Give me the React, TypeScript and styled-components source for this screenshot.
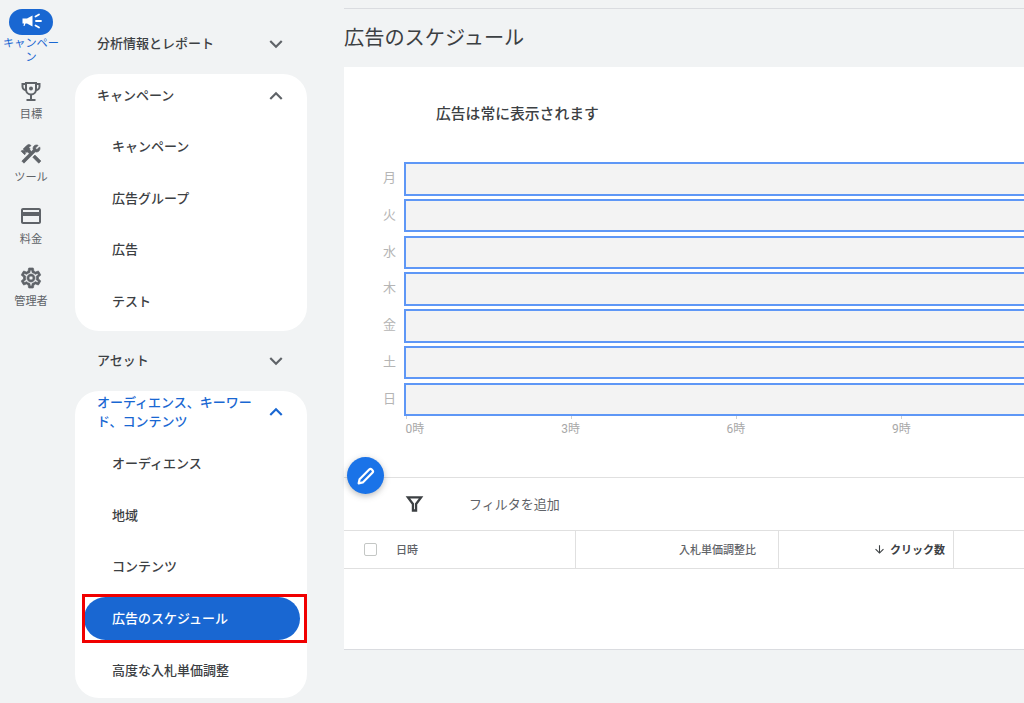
import React from 'react';
import styled, { createGlobalStyle } from 'styled-components';
import {
  MdConstruction,
  MdExpandLess,
  MdExpandMore,
  MdOutlineCreditCard,
  MdOutlineSettings,
  MdArrowDownward,
} from 'react-icons/md';

const GlobalStyle = createGlobalStyle`
  html, body {
    margin: 0;
    height: 100%;
    overflow: hidden;
    background: #f1f3f4;
    font-family: Roboto, "Noto Sans CJK JP", sans-serif;
  }
`;

const Page = styled.div`
  display: flex;
  width: 1024px;
  height: 703px;
  overflow: hidden;
`;

const Rail = styled.nav`
  flex: 0 0 62px;
  display: flex;
  flex-direction: column;
  align-items: center;
  padding-top: 9px;
`;

const RailItem = styled.div<{ $active?: boolean; $height: number }>`
  width: 62px;
  height: ${p => p.$height}px;
  display: flex;
  flex-direction: column;
  align-items: center;
  text-align: center;
  font-size: 11.2px;
  line-height: 13.5px;
  color: ${p => (p.$active ? '#1967d2' : '#5f6368')};
  word-break: break-all;
`;

const RailIcon = styled.div<{ $active?: boolean }>`
  width: 44px;
  height: 26px;
  border-radius: 13px;
  margin-bottom: ${p => (p.$active ? 2 : 4)}px;
  display: flex;
  align-items: center;
  justify-content: center;
  font-size: 24px;
  background: ${p => (p.$active ? '#1967d2' : 'transparent')};
  color: ${p => (p.$active ? '#fff' : '#5f6368')};
`;

const ThickIcon = styled.span`
  display: flex;
  svg {
    stroke: currentColor;
    stroke-width: 0.7;
  }
  svg path[fill='none'] {
    stroke: none;
  }
`;

const Sidebar = styled.aside`
  flex: 0 0 232px;
  margin-left: 13px;
  padding-top: 18px;
`;

const SectionHead = styled.div<{ $height: number; $accent?: boolean }>`
  box-sizing: border-box;
  height: ${p => p.$height}px;
  padding: 0 18px 0 22px;
  display: flex;
  align-items: flex-start;
  justify-content: space-between;
  gap: 8px;
  font-size: 13px;
  line-height: 19px;
  font-weight: 500;
  color: ${p => (p.$accent ? '#1967d2' : '#3c4043')};
  > span {
    padding-top: ${p => (p.$accent ? 2 : p.$height === 52 ? 16 : 12)}px;
  }
  svg {
    flex: 0 0 auto;
    font-size: 26px;
    margin-top: ${p => (p.$accent ? 8 : p.$height === 52 ? 13 : 9)}px;
    color: ${p => (p.$accent ? '#1967d2' : '#5f6368')};
  }
`;

const Card = styled.div<{ $top: number; $bottom: number; $pad: number }>`
  background: #fff;
  border-radius: 24px;
  margin: ${p => p.$top}px 0 ${p => p.$bottom}px;
  padding-bottom: ${p => p.$pad}px;
`;

const NavItem = styled.div<{ $height: number }>`
  height: ${p => p.$height}px;
  padding-left: 37px;
  display: flex;
  align-items: center;
  font-size: 13px;
  font-weight: 500;
  color: #3c4043;
`;

const ActiveFrame = styled.div`
  position: relative;
  height: 53.5px;
  display: flex;
  align-items: center;
  &::after {
    content: '';
    position: absolute;
    left: 7px;
    right: 0;
    top: 2px;
    height: 49px;
    box-sizing: border-box;
    border: 3px solid #f00000;
  }
`;

const ActivePill = styled.div`
  margin-left: 9px;
  width: 216px;
  height: 43px;
  border-radius: 22px;
  background: #1967d2;
  color: #fff;
  padding: 0 0 2px 28px;
  box-sizing: border-box;
  display: flex;
  align-items: center;
  font-size: 13px;
  font-weight: 500;
`;

const Main = styled.main`
  flex: 1;
  min-width: 0;
  margin-left: 37px;
  padding-top: 8px;
`;

const TopRule = styled.div`
  height: 1px;
  background: #dadce0;
`;

const PageTitle = styled.h1`
  margin: 0;
  height: 58px;
  display: flex;
  align-items: center;
  font-size: 20.2px;
  font-weight: 400;
  color: #3c4043;
  padding-bottom: 4px;
  box-sizing: border-box;
`;

const Panel = styled.section`
  position: relative;
  background: #fff;
  height: 582px;
  border-bottom: 1px solid #dadce0;
`;

const ChartTitle = styled.div`
  height: 95px;
  padding: 37px 0 0 92px;
  box-sizing: border-box;
  font-size: 14.8px;
  line-height: 20px;
  font-weight: 500;
  color: #3c4043;
`;

const DayRow = styled.div`
  height: 36.8px;
  display: flex;
`;

const DayLabel = styled.div`
  flex: 0 0 52px;
  margin-right: 8px;
  text-align: right;
  font-size: 13px;
  line-height: 31px;
  color: #b5b5b5;
`;

const DayBar = styled.div`
  flex: 1;
  height: 33.5px;
  box-sizing: border-box;
  background: #f3f3f3;
  border: 2px solid #5e97f6;
  border-right: none;
`;

const Axis = styled.div`
  display: flex;
  height: 24px;
  margin: -4px 0 0 61.5px;
`;

const AxisCell = styled.div<{ $first?: boolean }>`
  position: relative;
  flex: 0 0 165.3px;
  font-size: 12px;
  line-height: 26px;
  color: #a8a8a8;
  span {
    display: inline-block;
    transform: translateX(${p => (p.$first ? '0' : '-9.5px')});
  }
  &::before {
    content: '';
    position: absolute;
    left: 0;
    top: 0;
    width: 1px;
    height: 3px;
    background: #d0d0d0;
  }
`;

const Fab = styled.div`
  position: absolute;
  left: 3px;
  top: 390px;
  width: 37px;
  height: 37px;
  border-radius: 50%;
  background: #1a73e8;
  color: #fff;
  display: flex;
  align-items: center;
  justify-content: center;
  box-shadow: 0 2px 6px rgba(60, 64, 67, 0.35);
`;

const FilterBar = styled.div`
  margin-top: 37px;
  box-sizing: border-box;
  height: 54px;
  border-top: 1px solid #e0e0e0;
  border-bottom: 1px solid #e0e0e0;
  display: flex;
  align-items: center;
  gap: 44px;
  padding-left: 60px;
  font-size: 13px;
  color: #5f6368;
`;

const HeaderRow = styled.div`
  box-sizing: border-box;
  height: 38px;
  display: flex;
  border-bottom: 1px solid #e0e0e0;
  font-size: 11px;
`;

const HeaderCell = styled.div<{ $width: number; $pad: number; $right?: boolean; $strong?: boolean }>`
  flex: 0 0 ${p => p.$width}px;
  box-sizing: border-box;
  display: flex;
  align-items: center;
  justify-content: ${p => (p.$right ? 'flex-end' : 'flex-start')};
  border-right: 1px solid #e0e0e0;
  padding: ${p => (p.$right ? `0 ${p.$pad}px 0 0` : `0 0 0 ${p.$pad}px`)};
  color: ${p => (p.$strong ? '#3c4043' : '#5f6368')};
  font-weight: ${p => (p.$strong ? 700 : 500)};
  svg {
    font-size: 13px;
    margin-right: 4px;
  }
`;

const Checkbox = styled.div`
  width: 13px;
  height: 13px;
  box-sizing: border-box;
  border: 1px solid #c4c7c5;
  border-radius: 2px;
  margin-right: 19px;
`;

const CampaignIcon = () => (
  <svg width="24" height="24" viewBox="0 0 24 24" fill="none" stroke="currentColor" strokeLinecap="round">
    <path d="M3.500 8.500h4.500l5.500-3v11l-5.500-3H6.500l-1 2.500h-1l.5-2.500H3.500z" fill="currentColor" stroke="none" />
    <path d="M17 11h5M16.500 6.500l3.500-2M16.500 15.500l3.500 2" strokeWidth="1.800" />
  </svg>
);

const TrophyIcon = () => (
  <svg width="24" height="24" viewBox="0 0 24 24" fill="none" stroke="currentColor" strokeWidth="2">
    <path d="M7 4h10v6.500a5 5 0 0 1-10 0z" />
    <path d="M7 5H3.500v2.500A3.500 3.500 0 0 0 7 11M17 5h3.500v2.500A3.500 3.500 0 0 1 17 11" />
    <path d="M12 15.500V20M7.500 21h9" />
    <circle cx="12" cy="9.500" r="2" fill="currentColor" stroke="none" />
  </svg>
);

const PencilIcon = () => (
  <svg width="22" height="22" viewBox="0 0 24 24" fill="none" stroke="currentColor" strokeWidth="2.400" strokeLinejoin="round">
    <path d="M4 20l1-4.500L15.500 5a2 2 0 0 1 2.800 0l.7.700a2 2 0 0 1 0 2.800L8.500 19z" />
  </svg>
);

const FilterIcon = () => (
  <svg width="21" height="21" viewBox="0 0 24 24" fill="none" stroke="#3c4043" strokeWidth="2.600">
    <path d="M4.500 5h15L13.800 12.500V20h-3.600v-7.500z" />
  </svg>
);

const days = ['月', '火', '水', '木', '金', '土', '日'];
const hours = ['0時', '3時', '6時', '9時'];

const railItems = [
  { label: '目標', icon: <TrophyIcon />, height: 63 },
  { label: 'ツール', icon: <ThickIcon><MdConstruction /></ThickIcon>, height: 62 },
  { label: '料金', icon: <MdOutlineCreditCard />, height: 62 },
  { label: '管理者', icon: <ThickIcon><MdOutlineSettings /></ThickIcon>, height: 62 },
];

const App: React.FC = () => (
  <Page>
    <GlobalStyle />
    <Rail>
      <RailItem $active $height={69}>
        <RailIcon $active><CampaignIcon /></RailIcon>
        キャンペーン
      </RailItem>
      {railItems.map(item => (
        <RailItem key={item.label} $height={item.height}>
          <RailIcon>{item.icon}</RailIcon>
          {item.label}
        </RailItem>
      ))}
    </Rail>

    <Sidebar>
      <SectionHead $height={52}><span>分析情報とレポート</span><MdExpandMore /></SectionHead>
      <Card $top={4} $bottom={4} $pad={4.3}>
        <SectionHead $height={45.7}><span>キャンペーン</span><MdExpandLess /></SectionHead>
        <NavItem $height={51.7}>キャンペーン</NavItem>
        <NavItem $height={51.7}>広告グループ</NavItem>
        <NavItem $height={51.7}>広告</NavItem>
        <NavItem $height={51.7}>テスト</NavItem>
      </Card>
      <SectionHead $height={52}><span>アセット</span><MdExpandMore /></SectionHead>
      <Card $top={4} $bottom={0} $pad={4.5}>
        <SectionHead $height={46.5} $accent><span>オーディエンス、キーワード、コンテンツ</span><MdExpandLess /></SectionHead>
        <NavItem $height={51.5}>オーディエンス</NavItem>
        <NavItem $height={51.5}>地域</NavItem>
        <NavItem $height={51.5}>コンテンツ</NavItem>
        <ActiveFrame><ActivePill>広告のスケジュール</ActivePill></ActiveFrame>
        <NavItem $height={48.5}>高度な入札単価調整</NavItem>
      </Card>
    </Sidebar>

    <Main>
      <TopRule />
      <PageTitle>広告のスケジュール</PageTitle>
      <Panel>
        <ChartTitle>広告は常に表示されます</ChartTitle>
        {days.map(day => (
          <DayRow key={day}>
            <DayLabel>{day}</DayLabel>
            <DayBar />
          </DayRow>
        ))}
        <Axis>
          {hours.map((hour, i) => (
            <AxisCell key={hour} $first={i === 0}><span>{hour}</span></AxisCell>
          ))}
        </Axis>
        <Fab><PencilIcon /></Fab>
        <FilterBar>
          <FilterIcon />
          フィルタを追加
        </FilterBar>
        <HeaderRow>
          <HeaderCell $width={232} $pad={20}>
            <Checkbox />
            日時
          </HeaderCell>
          <HeaderCell $width={203} $pad={22} $right>入札単価調整比</HeaderCell>
          <HeaderCell $width={175} $pad={8} $right $strong><MdArrowDownward />クリック数</HeaderCell>
        </HeaderRow>
      </Panel>
    </Main>
  </Page>
);

export default App;
